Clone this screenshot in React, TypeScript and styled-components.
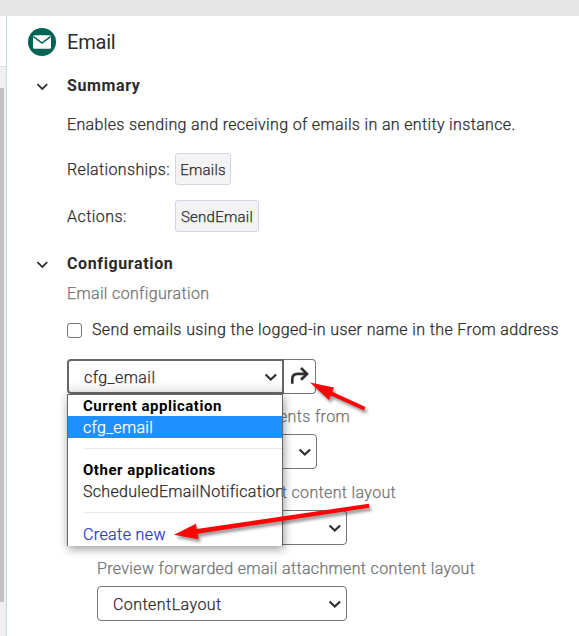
import React from "react";
import styled, { createGlobalStyle } from "styled-components";

const GlobalStyle = createGlobalStyle`
  * { box-sizing: border-box; }
  html, body { margin: 0; padding: 0; overflow: hidden; background: #fff; }
  body {
    font: 300 16px/22px Roboto, "Liberation Sans", sans-serif;
    color: #2b2b2b;
    -webkit-text-stroke: 0.25px currentColor;
  }
`;

const Page = styled.div`
  position: relative;
  width: 579px;
  height: 636px;
  display: flex;
  flex-direction: column;
  overflow: hidden;
`;
const TopBar = styled.div`
  height: 16px;
  flex: none;
  background: #e6e6e6;
`;
const Body = styled.div`
  flex: 1;
  display: flex;
  min-height: 0;
`;
const Side = styled.div`
  width: 7px;
  border-right: 1px solid #c8d9dd;
  display: flex;
  flex-direction: column;
`;
const SideHead = styled.div`
  height: 51px;
  border-bottom: 1px solid #dcdcdc;
`;
const ScrollTrack = styled.div`
  flex: 1;
  background: #f0f0f0;
  padding-top: 21px;
`;
const ScrollThumb = styled.div`
  width: 4px;
  height: 514px;
  background: #c1c1c1;
`;
const Main = styled.main`
  flex: 1;
  padding-left: 21px;
`;
const Row = styled.div<{ $h: number; $top?: number }>`
  display: flex;
  align-items: center;
  height: ${(p) => p.$h}px;
  padding-top: ${(p) => p.$top ?? 0}px;
  white-space: nowrap;
`;
const IconCell = styled.div`
  width: 39px;
  display: flex;
  flex: none;
`;
const ChevronCell = styled(IconCell)`
  padding: 2px 0 0 8px;
`;
const Content = styled.div`
  padding-left: 39px;
`;
const Nested = styled.div`
  padding-left: 30px;
`;
const Text = styled.span<{ $ls?: number }>`
  letter-spacing: ${(p) => p.$ls ?? 0.35}px;
`;
const Title = styled.h1`
  margin: 0;
  font-size: 20px;
  font-weight: 400;
  letter-spacing: -0.2px;
  -webkit-text-stroke: 0;
`;
const Heading = styled.h2`
  margin: 0;
  font-size: 16px;
  font-weight: 700;
  letter-spacing: 0.62px;
  -webkit-text-stroke: 0;
`;
const Muted = styled(Text)`
  color: #737373;
`;
const RightMuted = styled(Muted)`
  width: 283px;
  text-align: right;
`;
const Term = styled(Text)`
  width: 108px;
  padding-top: 2px;
`;
const Chip = styled.span<{ $w: number }>`
  width: ${(p) => p.$w}px;
  height: 32px;
  border: 1px solid #cfd6e4;
  border-radius: 3px;
  background: #f3f3f3;
  font-size: 15px;
  line-height: 32px;
  text-align: center;
  letter-spacing: 0.25px;
`;
const Checkbox = styled.span`
  width: 15px;
  height: 15px;
  margin-right: 10px;
  border: 1px solid #767676;
  border-radius: 3px;
`;
const Select = styled.div<{ $w: number; $open?: boolean }>`
  position: relative;
  display: flex;
  align-items: center;
  justify-content: space-between;
  width: ${(p) => p.$w}px;
  height: 35px;
  padding: 2px 5px 0 15px;
  border: ${(p) => (p.$open ? "2px solid #666" : "1px solid #757575")};
  border-radius: ${(p) => (p.$open ? "4px 0 0 4px" : "4px")};
  background: ${(p) =>
    p.$open ? "linear-gradient(#fff 65%, #eee)" : "#fff"};
`;
const JumpButton = styled.button`
  width: 32px;
  height: 35px;
  padding: 0 0 0 4px;
  border: 1px solid #757575;
  border-left: 0;
  border-radius: 0 4px 4px 0;
  background: #fff;
  display: flex;
  align-items: center;
`;
const Menu = styled.div`
  position: absolute;
  z-index: 1;
  left: -2px;
  top: 33px;
  width: 216px;
  height: 152px;
  background: #fff;
  border: solid #666;
  border-width: 1px 1px 0;
  box-shadow: 1px 3px 9px rgba(0, 0, 0, 0.4);
  overflow: hidden;
`;
const Option = styled.div<{ $kind?: "group" | "active" | "link"; $ls?: number }>`
  height: 21px;
  padding-left: 15px;
  line-height: 21px;
  white-space: nowrap;
  letter-spacing: ${(p) => p.$ls ?? 0.3}px;
  ${(p) => p.$kind === "group" && "font-size: 15px; font-weight: 700; color: #000; letter-spacing: 0.52px; -webkit-text-stroke: 0;"}
  ${(p) => p.$kind === "active" && "height: 22px; line-height: 23px; background: #1e90ff; color: #fff;"}
  ${(p) => p.$kind === "link" && "color: #2839c8;"}
  &:first-child {
    line-height: 23px;
  }
`;
const Divider = styled.div`
  height: 1px;
  margin: 10px 0 11px 15px;
  background: #e9e9e9;
`;
const Annotations = styled.svg`
  position: absolute;
  z-index: 2;
  left: 0;
  top: 0;
  pointer-events: none;
  filter: drop-shadow(2px 3px 1.5px rgba(0, 0, 0, 0.4));
`;

const Chevron = ({ size = 12, weight = 2 }: { size?: number; weight?: number }) => (
  <svg width={size} height={size} viewBox="0 0 12 12" fill="none">
    <path d="M1.400 3.200 6.300 7.900l4.900-4.700" stroke="#303030" strokeWidth={weight} />
  </svg>
);
const MailIcon = () => (
  <svg width="28" height="28" viewBox="0 0 28 28">
    <circle cx="14" cy="14" r="14" fill="#006455" />
    <rect x="5" y="7.200" width="18" height="13.600" rx="1.600" fill="#fff" />
    <path d="M5.500 8.700 14 15l8.500-6.300" fill="none" stroke="#006455" strokeWidth="1.500" />
  </svg>
);
const JumpIcon = () => (
  <svg width="22" height="22" viewBox="0 0 22 22" fill="none" stroke="#303030" strokeWidth="2.700">
    <path d="M4.300 17.800v-4.700q0-5.200 5.200-5.200H19" />
    <path d="m13 2 6 5.900-6 5.900" />
  </svg>
);

export default function App() {
  return (
    <Page>
      <GlobalStyle />
      <TopBar />
      <Body>
        <Side>
          <SideHead />
          <ScrollTrack>
            <ScrollThumb />
          </ScrollTrack>
        </Side>
        <Main>
          <Row $h={52}>
            <IconCell><MailIcon /></IconCell>
            <Title>Email</Title>
          </Row>
          <Row $h={36}>
            <ChevronCell><Chevron weight={1.8} /></ChevronCell>
            <Heading>Summary</Heading>
          </Row>
          <Content>
            <Row $h={41}>
              <Text>Enables sending and receiving of emails in an entity instance.</Text>
            </Row>
            <Row $h={48}>
              <Term>Relationships:</Term>
              <Chip $w={56}>Emails</Chip>
            </Row>
            <Row $h={46}>
              <Term $ls={0.45}>Actions:</Term>
              <Chip $w={84}>SendEmail</Chip>
            </Row>
          </Content>
          <Row $h={49}>
            <ChevronCell><Chevron weight={1.8} /></ChevronCell>
            <Heading>Configuration</Heading>
          </Row>
          <Content>
            <Row $h={11}>
              <Muted>Email configuration</Muted>
            </Row>
            <Row $h={60} $top={2}>
              <Checkbox />
              <Text $ls={0.38}>Send emails using the logged-in user name in the From address</Text>
            </Row>
            <Row $h={35}>
              <Select $w={217} $open>
                <Text $ls={0.45}>cfg_email</Text>
                <Chevron size={13} />
                <Menu>
                  <Option $kind="group">Current application</Option>
                  <Option $kind="active">cfg_email</Option>
                  <Divider />
                  <Option $kind="group">Other applications</Option>
                  <Option>ScheduledEmailNotifications</Option>
                  <Divider />
                  <Option $kind="link" $ls={0.4}>Create new</Option>
                </Menu>
              </Select>
              <JumpButton aria-label="Open configuration"><JumpIcon /></JumpButton>
            </Row>
            <Row $h={40} $top={5}>
              <RightMuted>Create attachments from</RightMuted>
            </Row>
            <Select $w={250}><span /><Chevron size={13} /></Select>
            <Nested>
              <Row $h={41} $top={7}>
                <Muted>Preview email attachment content layout</Muted>
              </Row>
              <Select $w={250}><span /><Chevron size={13} /></Select>
              <Row $h={41} $top={7}>
                <Muted>Preview forwarded email attachment content layout</Muted>
              </Row>
              <Select $w={250}>
                <Text $ls={0.45}>ContentLayout</Text>
                <Chevron size={13} />
              </Select>
            </Nested>
          </Content>
        </Main>
      </Body>
      <Annotations width="579" height="636" fill="#fb0505">
        <path d="m310 382.500 24 5-1.700 4.300 33.200 15.200-1.600 3.600-33-15.200-2 4.600z" />
        <path d="m174 534.700 22-11 .8 5.200 172-25.200.7 4-171.800 26 .8 5.600z" />
      </Annotations>
    </Page>
  );
}
